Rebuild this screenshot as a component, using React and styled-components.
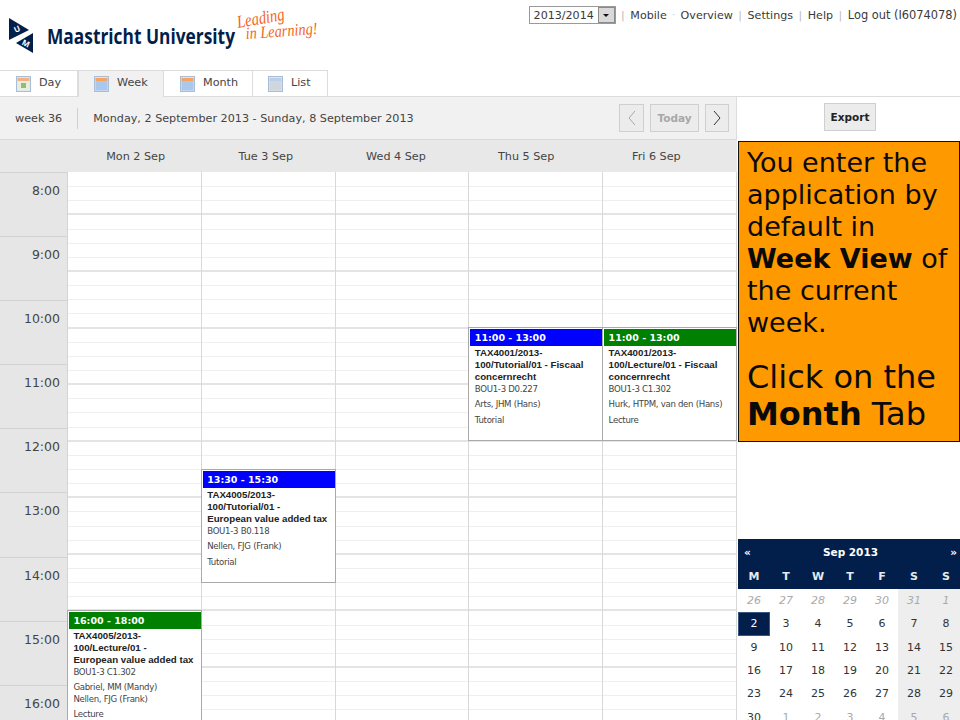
import React from "react";
import styled, { createGlobalStyle } from "styled-components";

const GlobalStyle = createGlobalStyle`
  html, body {
    margin: 0;
    padding: 0;
    background: #fff;
    overflow: hidden;
  }
  * {
    box-sizing: border-box;
  }
`;

const NAVY = "#021f4b";

const Page = styled.div`
  width: 960px;
  height: 720px;
  overflow: hidden;
  font-family: "DejaVu Sans", Verdana, sans-serif;
  color: #333;
`;

const Header = styled.header`
  height: 70px;
  display: flex;
  justify-content: space-between;
  align-items: flex-start;
`;

const LogoBox = styled.div`
  padding: 10px 0 0 8px;
`;

const TopLinks = styled.nav`
  display: flex;
  align-items: center;
  height: 18px;
  margin-top: 6px;
  padding-right: 3px;
  font-size: 11.1px;
  color: #3a3a3a;
`;

const YearSelect = styled.div`
  width: 87px;
  height: 18px;
  border: 1px solid #9a9a9a;
  display: flex;
  align-items: center;
  justify-content: space-between;
  padding-left: 4px;
`;

const SelectArrow = styled.span`
  width: 17px;
  height: 16px;
  background: #d9d9d9;
  border: 1px solid #8a8a8a;
  display: flex;
  align-items: center;
  justify-content: center;
  &::after {
    content: "";
    border-left: 3px solid transparent;
    border-right: 3px solid transparent;
    border-top: 3px solid #111;
  }
`;

const Sep = styled.span`
  color: #bbb;
  margin: 0 5.5px;
  font-size: ${(p) => (p.$dot ? "9px" : "11px")};
`;

const LogOut = styled.span`
  font-size: 11.4px;
`;

const Tabs = styled.div`
  height: 27px;
  display: flex;
  border-bottom: 1px solid #dcdcdc;
`;

const Tab = styled.div`
  width: ${(p) => p.$w}px;
  height: ${(p) => (p.$active ? "27px" : "26px")};
  display: flex;
  align-items: center;
  gap: 8px;
  padding-left: ${(p) => p.$pad}px;
  font-size: 11.2px;
  color: #444;
  background: ${(p) => (p.$active ? "#f1f1f1" : "#fff")};
  border-top: 1px solid #dcdcdc;
  border-right: 1px solid #dcdcdc;
  border-left: ${(p) => (p.$active ? "1px solid #dcdcdc" : "none")};
`;

const TabLabel = styled.span`
  margin-top: -3px;
`;

const Main = styled.div`
  display: flex;
  align-items: flex-start;
`;

const LeftPane = styled.section`
  width: 737px;
  flex: none;
`;

const Toolbar = styled.div`
  height: 43px;
  background: #f1f1f1;
  border-bottom: 1px solid #d8d8d8;
  border-right: 1px solid #ddd;
  display: flex;
  align-items: center;
  padding: 1px 7px 0 15px;
  font-size: 11.2px;
  color: #444;
`;

const WeekNo = styled.span`
  padding-right: 15px;
  height: 21px;
  line-height: 21px;
  border-right: 1px solid #d0d0d0;
  margin-right: 15px;
`;

const DateRange = styled.span`
  flex: 1;
`;

const ToolButton = styled.div`
  height: 28px;
  width: ${(p) => p.$w}px;
  margin-left: ${(p) => p.$gap}px;
  margin-top: -2px;
  background: #ececec;
  border: 1px solid #cfcfcf;
  display: flex;
  align-items: center;
  justify-content: center;
  font-size: 10.5px;
  font-weight: bold;
  color: ${(p) => (p.$disabled ? "#a8a8a8" : "#222")};
`;

const DayHeads = styled.div`
  height: 32px;
  background: #e8e8e8;
  display: grid;
  grid-template-columns: 70.5px repeat(5, 130.2px);
  align-items: center;
  font-size: 11.2px;
  color: #444;
  text-align: center;
  padding-top: 1px;
`;

const Body = styled.div`
  display: flex;
`;

const Gutter = styled.div`
  width: 68px;
  flex: none;
  background: #e6e6e6;
  border-right: 1px solid #d4d4d4;
`;

const HourLabel = styled.div`
  height: 64.1px;
  border-top: 1px solid #d2d2d2;
  padding: 10px 7px 0 0;
  text-align: right;
  font-size: 12.5px;
  color: #444;
`;

const DayColumn = styled.div`
  position: relative;
  width: 133.8px;
  flex: none;
  padding-top: 1px;
  border-right: 1px solid #d8d8d8;
`;

const Slot = styled.div`
  height: 14.15px;
  border-bottom: ${(p) => (p.$major ? "2px solid #e4e4e4" : "1px solid #efefef")};
`;

const Event = styled.article`
  position: absolute;
  left: -1px;
  right: -1px;
  top: ${(p) => p.$top}px;
  height: 114px;
  background: #fff;
  border: 1px solid #aaa;
  padding: 1px 0 1px 1px;
  font-size: 8.6px;
  line-height: 11.9px;
  letter-spacing: -0.3px;
  color: #444;
`;

const EventTime = styled.div`
  height: 17px;
  line-height: 17px;
  padding-left: 4.4px;
  background: ${(p) => p.$color};
  color: #fff;
  font-weight: bold;
  font-size: 9.5px;
  letter-spacing: 0;
`;

const EventBody = styled.div`
  padding: 1px 3px 0 4.4px;
`;

const EventTitle = styled.div`
  font-family: "Liberation Sans", Arial, sans-serif;
  font-size: 9.7px;
  font-weight: bold;
  letter-spacing: 0;
  white-space: nowrap;
  color: #222;
`;

const EventLine = styled.div`
  margin-top: ${(p) => p.$gap ?? 0}px;
`;

const RightPane = styled.aside`
  width: 223px;
  flex: none;
  padding-left: 1px;
`;

const ExportBar = styled.div`
  height: 44px;
  display: flex;
  align-items: center;
  justify-content: center;
  padding: 0 0 2px 2px;
`;

const ExportButton = styled(ToolButton)`
  width: 52px;
`;

const Note = styled.div`
  width: 222px;
  height: 301px;
  background: #ff9900;
  border: 1px solid #111;
  padding: 5px 0 0 8px;
  color: #0a0a0a;
  font-size: 27px;
  line-height: 32px;
`;

const NoteLead = styled.p`
  margin: 0;
`;

const NoteCall = styled.p`
  margin: 20px 0 0;
  font-size: 32px;
  line-height: 37px;
`;

const MiniCal = styled.div`
  margin-top: 97px;
  width: 222px;
  overflow: hidden;
  font-size: 11px;
  color: #333;
`;

const CalHead = styled.div`
  background: ${NAVY};
  color: #e6eaf0;
  font-weight: bold;
`;

const CalTitle = styled.div`
  height: 25px;
  display: flex;
  align-items: center;
  justify-content: space-between;
  padding: 0 3px 0 6px;
  font-size: 10.5px;
  color: #fff;
`;

const Row = styled.div`
  display: grid;
  grid-template-columns: repeat(7, 32px);
  width: 224px;
  height: ${(p) => p.$h ?? 23.3}px;
  align-items: center;
  text-align: center;
`;

const Cell = styled.div`
  height: 100%;
  display: flex;
  align-items: center;
  justify-content: center;
  background: ${(p) => (p.$today ? NAVY : p.$weekend ? "#eeeeee" : "transparent")};
  color: ${(p) => (p.$today ? "#fff" : p.$muted ? "#aaa" : "#333")};
  font-style: ${(p) => (p.$italic ? "italic" : "normal")};
  border: ${(p) => (p.$today ? "1px solid #3a5580" : "none")};
`;

const TabIcon = ({ head = "#f4a460", fill = "#a9c8ec", day }) => (
  <svg width="15" height="16" viewBox="0 0 15 16">
    <rect x="0.5" y="0.5" width="14" height="15" fill="#dbe6f2" stroke="#a9bdd6" />
    <rect x="1.5" y="2" width="12" height="3" fill={head} />
    <rect x="1.5" y="5" width="12" height="9.5" fill={fill} />
    {day && <rect x="5" y="7" width="5" height="5" fill="#8fbf72" />}
  </svg>
);

const Logo = () => (
  <svg width="315" height="48" viewBox="0 0 315 48">
    <polygon points="1,8 21,20 1,30" fill={NAVY} />
    <polygon points="25,23 25,43 8,33" fill={NAVY} />
    <text x="6" y="22" fontFamily="Open Sans" fontSize="8" fontWeight="700" fill="#fff" transform="rotate(-25 9 19)">U</text>
    <text x="14" y="37" fontFamily="Open Sans" fontSize="8" fontWeight="700" fill="#fff" transform="rotate(25 19 34)">M</text>
    <text x="39" y="34" fontFamily="Open Sans" fontSize="21" fontWeight="700" fill={NAVY} textLength="188" lengthAdjust="spacingAndGlyphs">
      Maastricht University
    </text>
    <g fontFamily="Liberation Serif" fontStyle="italic" fill="#f26522">
      <text x="230" y="18" fontSize="18" transform="rotate(-10 230 18)" textLength="48" lengthAdjust="spacingAndGlyphs">Leading</text>
      <text x="238" y="29" fontSize="17" transform="rotate(-4 238 29)" textLength="72" lengthAdjust="spacingAndGlyphs">in Learning!</text>
    </g>
  </svg>
);

const Chevron = ({ dir, color }) => (
  <svg width="10" height="16" viewBox="0 0 10 16" fill="none" stroke={color} strokeWidth="1">
    <path d={dir === "left" ? "M8 1 L2 8 L8 15" : "M2 1 L8 8 L2 15"} />
  </svg>
);

const hours = ["8:00", "9:00", "10:00", "11:00", "12:00", "13:00", "14:00", "15:00", "16:00"];
const days = ["Mon 2 Sep", "Tue 3 Sep", "Wed 4 Sep", "Thu 5 Sep", "Fri 6 Sep"];
const slots = Array.from({ length: 40 }, (_, i) => i);

const events = {
  0: {
    top: 438,
    color: "#008000",
    time: "16:00 - 18:00",
    title: ["TAX4005/2013-", "100/Lecture/01 -", "European value added tax"],
    room: "BOU1-3 C1.302",
    people: ["Gabriel, MM (Mandy)", "Nellen, FJG (Frank)"],
    kind: "Lecture",
  },
  1: {
    top: 297,
    color: "#0000ff",
    time: "13:30 - 15:30",
    title: ["TAX4005/2013-", "100/Tutorial/01 -", "European value added tax"],
    room: "BOU1-3 B0.118",
    people: ["Nellen, FJG (Frank)"],
    kind: "Tutorial",
  },
  3: {
    top: 155,
    color: "#0000ff",
    time: "11:00 - 13:00",
    title: ["TAX4001/2013-", "100/Tutorial/01 - Fiscaal", "concernrecht"],
    room: "BOU1-3 D0.227",
    people: ["Arts, JHM (Hans)"],
    kind: "Tutorial",
  },
  4: {
    top: 155,
    color: "#008000",
    time: "11:00 - 13:00",
    title: ["TAX4001/2013-", "100/Lecture/01 - Fiscaal", "concernrecht"],
    room: "BOU1-3 C1.302",
    people: ["Hurk, HTPM, van den (Hans)"],
    kind: "Lecture",
  },
};

const weeks = [
  [26, 27, 28, 29, 30, 31, 1],
  [2, 3, 4, 5, 6, 7, 8],
  [9, 10, 11, 12, 13, 14, 15],
  [16, 17, 18, 19, 20, 21, 22],
  [23, 24, 25, 26, 27, 28, 29],
  [30, 1, 2, 3, 4, 5, 6],
];

const EventCard = ({ ev }) => (
  <Event $top={ev.top}>
    <EventTime $color={ev.color}>{ev.time}</EventTime>
    <EventBody>
      {ev.title.map((t) => (
        <EventTitle key={t}>{t}</EventTitle>
      ))}
      <EventLine $gap={1}>{ev.room}</EventLine>
      <EventLine $gap={3}>
        {ev.people.map((p) => (
          <div key={p}>{p}</div>
        ))}
      </EventLine>
      <EventLine $gap={4}>{ev.kind}</EventLine>
    </EventBody>
  </Event>
);

export default function App() {
  return (
    <Page>
      <GlobalStyle />
      <Header>
        <LogoBox>
          <Logo />
        </LogoBox>
        <TopLinks>
          <YearSelect>
            2013/2014
            <SelectArrow />
          </YearSelect>
          <Sep>|</Sep>Mobile<Sep $dot>·</Sep>Overview<Sep>|</Sep>Settings<Sep>|</Sep>Help<Sep>|</Sep>
          <LogOut>Log out (I6074078)</LogOut>
        </TopLinks>
      </Header>
      <Tabs>
        <Tab $w={78} $pad={16}><TabIcon head="#f4b183" fill="#e9efe0" day /><TabLabel>Day</TabLabel></Tab>
        <Tab $w={86} $pad={15} $active><TabIcon /><TabLabel>Week</TabLabel></Tab>
        <Tab $w={89} $pad={16}><TabIcon /><TabLabel>Month</TabLabel></Tab>
        <Tab $w={75} $pad={15}><TabIcon head="#b9cfe8" fill="#cfd6de" /><TabLabel>List</TabLabel></Tab>
      </Tabs>
      <Main>
        <LeftPane>
          <Toolbar>
            <WeekNo>week 36</WeekNo>
            <DateRange>Monday, 2 September 2013 - Sunday, 8 September 2013</DateRange>
            <ToolButton $w={25}><Chevron dir="left" color="#a8a8a8" /></ToolButton>
            <ToolButton $w={49} $gap={6} $disabled>Today</ToolButton>
            <ToolButton $w={24} $gap={6}><Chevron dir="right" color="#333" /></ToolButton>
          </Toolbar>
          <DayHeads>
            <span />
            {days.map((d) => (
              <span key={d}>{d}</span>
            ))}
          </DayHeads>
          <Body>
            <Gutter>
              {hours.map((h) => (
                <HourLabel key={h}>{h}</HourLabel>
              ))}
            </Gutter>
            {days.map((d, i) => (
              <DayColumn key={d}>
                {slots.map((s) => (
                  <Slot key={s} $major={s % 4 === 2} />
                ))}
                {events[i] && <EventCard ev={events[i]} />}
              </DayColumn>
            ))}
          </Body>
        </LeftPane>
        <RightPane>
          <ExportBar>
            <ExportButton>Export</ExportButton>
          </ExportBar>
          <Note>
            <NoteLead>
              You enter the application by default in <b>Week View</b> of the current week.
            </NoteLead>
            <NoteCall>
              Click on the <b>Month</b> Tab
            </NoteCall>
          </Note>
          <MiniCal>
            <CalHead>
              <CalTitle>
                <span>«</span>
                <span>Sep 2013</span>
                <span>»</span>
              </CalTitle>
              <Row $h={25}>
                {["M", "T", "W", "T", "F", "S", "S"].map((d, i) => (
                  <span key={i}>{d}</span>
                ))}
              </Row>
            </CalHead>
            {weeks.map((w, r) => (
              <Row key={r}>
                {w.map((n, c) => (
                  <Cell
                    key={c}
                    $weekend={c >= 5}
                    $today={r === 1 && c === 0}
                    $muted={r === 0 || (r === 5 && c > 0)}
                    $italic={r === 0}
                  >
                    {n}
                  </Cell>
                ))}
              </Row>
            ))}
          </MiniCal>
        </RightPane>
      </Main>
    </Page>
  );
}
